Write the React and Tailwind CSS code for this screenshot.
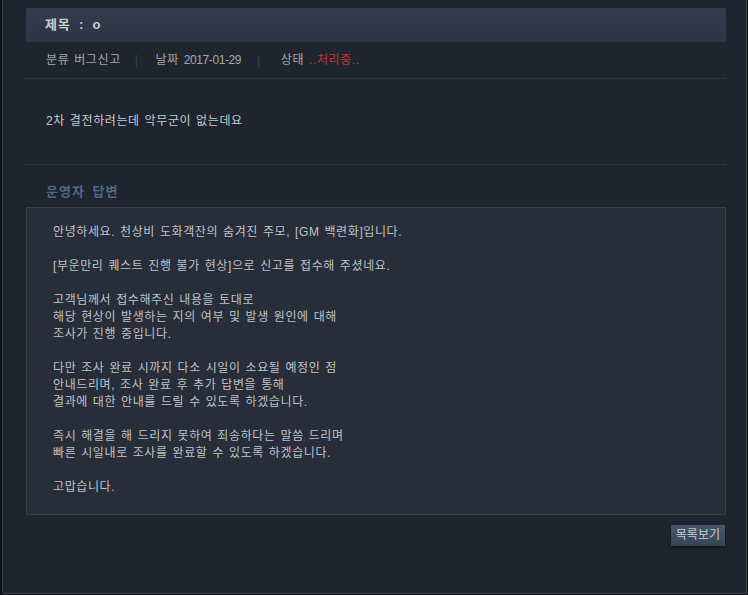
import React from 'react';

const answer = [
  '안녕하세요. 천상비 도화객잔의 숨겨진 주모, [GM 백련화]입니다.',
  '',
  '[부운만리 퀘스트 진행 불가 현상]으로 신고를 접수해 주셨네요.',
  '',
  '고객님께서 접수해주신 내용을 토대로',
  '해당 현상이 발생하는 지의 여부 및 발생 원인에 대해',
  '조사가 진행 중입니다.',
  '',
  '다만 조사 완료 시까지 다소 시일이 소요될 예정인 점',
  '안내드리며, 조사 완료 후 추가 답변을 통해',
  '결과에 대한 안내를 드릴 수 있도록 하겠습니다.',
  '',
  '즉시 해결을 해 드리지 못하여 죄송하다는 말씀 드리며',
  '빠른 시일내로 조사를 완료할 수 있도록 하겠습니다.',
  '',
  '고맙습니다.',
];

export default function App() {
  return (
    <div className="w-[748px] h-[595px] bg-[#0e1115] pl-[2px] pr-[1px] pb-[1px] font-['Liberation_Sans','Noto_Sans_CJK_KR',sans-serif] text-[12px] tracking-[0.6px] [word-spacing:1px]">
      <div className="h-full bg-[#1f252f] border-l border-r border-b border-[#3e444c] rounded-bl-[3px] pl-[23px] pr-[20px] pt-[8px] flex flex-col">
        {/* 제목 */}
        <div className="h-[34px] bg-gradient-to-b from-[#333c4d] to-[#2d3545] flex items-center px-[19px]">
          <span className="text-[13px] font-bold text-[#c9cdd3] tracking-[0.8px] [word-spacing:4px]">제목 : o</span>
        </div>

        {/* 정보 */}
        <div className="h-[37px] flex items-center pl-[20px] text-[#a2a8b0] border-b border-dotted border-[#3a414d]">
          <span>분류 버그신고</span>
          <span className="ml-[14px] mr-[17px] text-[#3d4450]">|</span>
          <span>날짜 <span className="tracking-[-0.4px]">2017-01-29</span></span>
          <span className="ml-[16px] mr-[20px] text-[#3d4450]">|</span>
          <span>상태 <span className="text-[#c2392f]">..처리중..</span></span>
        </div>

        {/* 본문 */}
        <div className="h-[86px] pl-[20px] pt-[33px] text-[#c6cad0] border-b border-dotted border-[#3a414d]">
          2차 결전하려는데 악무군이 없는데요
        </div>

        <div className="h-[42px] pl-[20px] pt-[18px] text-[13px] font-bold text-[#4e6a86] leading-[17px] tracking-[1px] [word-spacing:3px]">
          운영자 답변
        </div>

        {/* 답변 */}
        <div className="h-[308px] bg-[#282e39] border border-[#383f4b] pl-[26px] pt-[16px] text-[#bec2c9] leading-[17px]">
          {answer.map((line, i) => (
            <div key={i} className="h-[17px] whitespace-pre">{line}</div>
          ))}
        </div>

        <div className="flex justify-end pt-[10px] pr-[1px]">
          <button className="h-[21px] px-[5px] bg-gradient-to-b from-[#465868] to-[#344453] text-[#c5ced7] text-[12px] leading-[21px] tracking-[0px] [word-spacing:0px] shadow-[0_2px_3px_rgba(0,0,0,0.5)]">
            목록보기
          </button>
        </div>
      </div>
    </div>
  );
}
